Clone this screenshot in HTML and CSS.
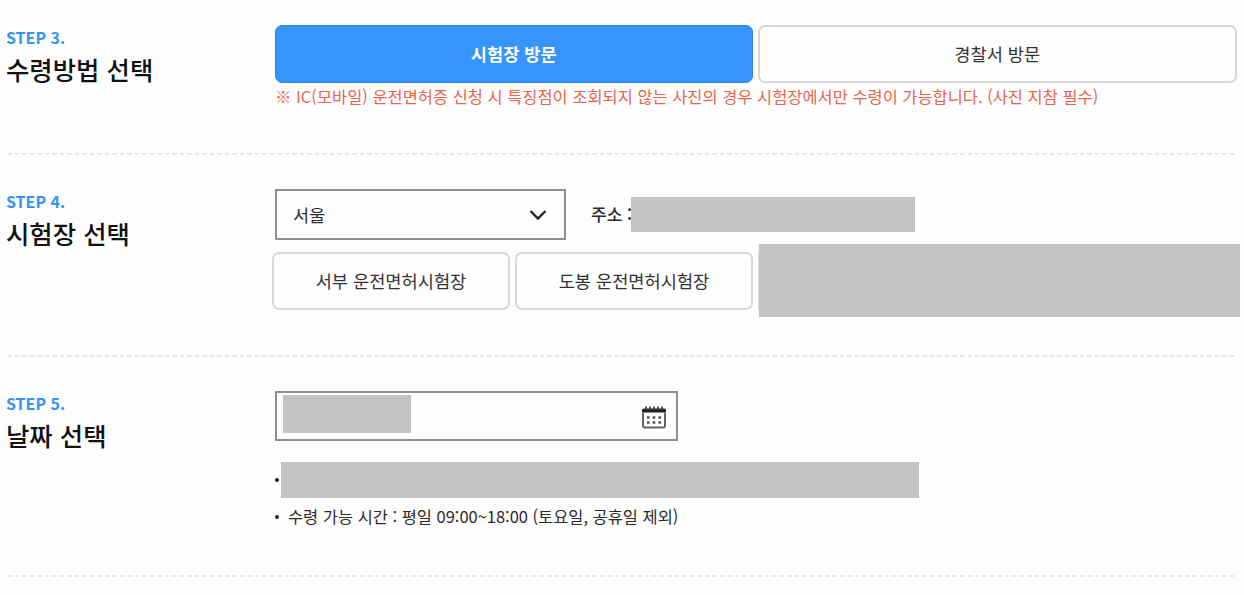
FILE: index.html
```html
<!DOCTYPE html>
<html lang="ko">
<head>
    <meta charset="UTF-8">
    <title>운전면허증 수령 신청</title>
    <link rel="stylesheet" href="styles.css">
</head>
<body>
    <main>
        <section class="step step3">
            <div class="step-title">
                <p>STEP 3.</p>
                <h2>수령방법 선택</h2>
            </div>
            <div class="step-body">
                <div class="btn-row">
                    <button class="btn active">시험장 방문</button>
                    <button class="btn">경찰서 방문</button>
                </div>
                <p class="warning"><span>※ IC(모바일) 운전면허증 신청 시 특징점이 조회되지 않는 사진의 경우 시험장에서만 수령이 가능합니다. (사진 지참 필수)</span></p>
            </div>
        </section>

        <section class="step step4">
            <div class="step-title">
                <p>STEP 4.</p>
                <h2>시험장 선택</h2>
            </div>
            <div class="step-body">
                <div class="region-row">
                    <div class="select">
                        <span>서울</span>
                        <svg width="18" height="12" viewBox="0 0 18 12"><path d="M1.5 2 L9 9.5 L16.5 2" fill="none" stroke="#222" stroke-width="2.3"/></svg>
                    </div>
                    <span class="address">주소 :</span>
                    <div class="mask mask-address"></div>
                </div>
                <div class="place-row">
                    <button class="btn">서부 운전면허시험장</button>
                    <button class="btn">도봉 운전면허시험장</button>
                    <div class="place-rest"><div class="mask mask-place"></div></div>
                </div>
            </div>
        </section>

        <section class="step step5">
            <div class="step-title">
                <p>STEP 5.</p>
                <h2>날짜 선택</h2>
            </div>
            <div class="step-body">
                <div class="date">
                    <div class="mask mask-date"></div>
                    <svg width="24" height="23" viewBox="0 0 24 23">
                        <path d="M1 7 V19.5 Q1 21.5 3 21.5 H21 Q23 21.5 23 19.5 V7" fill="none" stroke="#666" stroke-width="2"/>
                        <path d="M0 6.5 V4 Q0 2.5 2 2.5 H22 Q24 2.5 24 4 V6.5 Z" fill="#222"/>
                        <path d="M4 .5 V4 M8 .5 V4 M12 .5 V4 M16 .5 V4 M20 .5 V4" stroke="#444" stroke-width="1.8"/>
                        <path d="M5 11.5 H7.6 M10.7 11.5 H13.3 M16.4 11.5 H19 M5 16.5 H7.6 M10.7 16.5 H13.3 M16.4 16.5 H19" stroke="#555" stroke-width="2.5"/>
                    </svg>
                </div>
                <ul class="notes">
                    <li class="note-hidden"><div class="mask mask-note"></div></li>
                    <li><span>수령 가능 시간 : 평일 09:00~18:00 (토요일, 공휴일 제외)</span></li>
                </ul>
            </div>
        </section>
    </main>
</body>
</html>
```

FILE: styles.css
```css
* {
    box-sizing: border-box;
}
body {
    margin: 0;
    background-color: #fefefe;
    color: #2a2a2a;
    font-family: "Noto Sans CJK KR", sans-serif;
    font-size: 17.5px;
    overflow: hidden;
}
p, h2, ul {
    margin: 0;
    padding: 0;
}
main {
    padding-left: 6px;
}
.step {
    display: flex;
    width: 1231px;
    /* dashed divider under each step */
    background: repeating-linear-gradient(90deg, transparent 0 1px, #e6e6e6 1px 5.5px, transparent 5.5px 8.5px) left bottom / 100% 2px no-repeat;
    background-image: repeating-linear-gradient(90deg, transparent 0 1.5px, #e6e6e6 1.5px 6px, transparent 6px 7.5px);
}
.step3 {
    height: 155px;
    padding-top: 25px;
}
.step4 {
    height: 202px;
    padding-top: 34px;
}
.step5 {
    height: 220px;
    padding-top: 34px;
}
.step-title {
    width: 269px;
    flex: none;
    margin-top: -1px;
}
.step-title p {
    color: #3493f5;
    font-size: 16px;
    font-weight: 700;
    line-height: 26px;
}
.step-title h2 {
    color: #111;
    font-size: 25.4px;
    font-weight: 500;
    line-height: 38px;
}
.step-body {
    flex: none;
    width: 962px;
}
.btn-row {
    display: flex;
    gap: 5px;
}
.btn {
    flex: 1;
    height: 58px;
    padding: 0 0 2px;
    background-color: #fefefe;
    border: 2px solid #d8d8d8;
    border-radius: 7px;
    color: #333;
    font-family: inherit;
    font-size: 17.6px;
}
.btn.active {
    background-color: #3694fa;
    border: 1px solid #2f87e5;
    color: #fff;
    font-weight: 700;
}
.warning {
    color: #e9654d;
    font-size: 16.45px;
    line-height: 26px;
    white-space: nowrap;
}
.region-row {
    display: flex;
    align-items: center;
}
.select {
    display: flex;
    align-items: center;
    justify-content: space-between;
    width: 291px;
    height: 51px;
    padding: 0 17px 0 16px;
    border: 2px solid #909090;
}
.address {
    width: 40px;
    margin: 0 0 3px 25px;
    font-size: 17px;
    font-weight: 500;
    white-space: nowrap;
    overflow: hidden;
}
.mask {
    background-color: #c3c3c3;
}
.mask-address {
    width: 284px;
    height: 35px;
}
.place-row {
    display: flex;
    gap: 5px;
    width: 968px;
    margin: 12px 0 0 -3px;
}
.place-row .btn {
    flex: none;
    width: 238px;
}
.place-rest {
    flex: 1;
    height: 58px;
    border-left: 1px solid #ddd;
}
.mask-place {
    height: 73px;
    margin-top: -8px;
}
.date {
    display: flex;
    align-items: center;
    justify-content: space-between;
    width: 403px;
    height: 50px;
    padding: 0 10px 0 6px;
    border: 2px solid #909090;
}
.date svg {
    margin-top: 3px;
}
.mask-date {
    width: 128px;
    height: 38px;
    margin-bottom: 4px;
}
.notes {
    margin-top: 20px;
    font-size: 16.45px;
    list-style: none;
}
.notes li {
    display: flex;
    align-items: center;
    height: 38px;
    white-space: nowrap;
}
.notes li span {
    margin-bottom: 2px;
}
.notes li::before {
    content: "";
    width: 4px;
    height: 4px;
    margin-right: 9px;
    border-radius: 50%;
    background-color: #222;
}
.notes .note-hidden {
    height: 37px;
}
.notes .note-hidden::before {
    margin-right: 2px;
}
.mask-note {
    width: 638px;
    height: 36px;
}
```
